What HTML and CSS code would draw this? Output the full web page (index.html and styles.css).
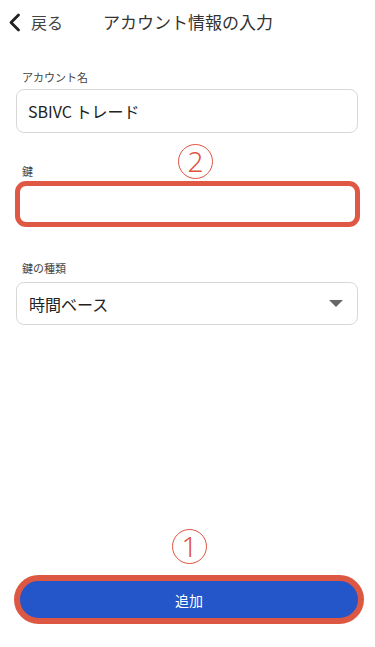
FILE: index.html
```html
<!DOCTYPE html>
<html lang="ja">
<head>
<meta charset="utf-8">
<title>アカウント情報の入力</title>
<link rel="stylesheet" href="styles.css">
</head>
<body>
<div class="screen">
  <header class="header">
    <div class="back">
      <svg class="chev" width="13" height="19" viewBox="0 0 13 19"><path d="M10.5 2 L3 9.5 L10.5 17" fill="none" stroke="#222" stroke-width="2.8" stroke-linecap="round" stroke-linejoin="round"/></svg>
      <span class="back-text">戻る</span>
    </div>
    <h1 class="title">アカウント情報の入力</h1>
  </header>

  <main class="form">
    <div class="field f1">
      <div class="label">アカウント名</div>
      <div class="input">SBIVC トレード</div>
    </div>
    <div class="field f2">
      <span class="mark mark2">2</span>
      <div class="label">鍵</div>
      <div class="input key"></div>
    </div>
    <div class="field f3">
      <div class="label">鍵の種類</div>
      <div class="input select">
        <span>時間ベース</span>
        <span class="arrow"></span>
      </div>
    </div>
  </main>

  <footer class="footer">
    <span class="mark mark1">1</span>
    <button class="add">追加</button>
  </footer>
</div>
</body>
</html>
```

FILE: styles.css
```css
* { box-sizing: border-box; }
html, body { margin: 0; padding: 0; background: #fff; }
body {
  font-family: "Noto Sans CJK JP", "Noto Sans", sans-serif;
  color: #222;
}
.screen {
  width: 375px;
  height: 647px;
  display: flex;
  flex-direction: column;
  position: relative;
}
.header {
  height: 44px;
  display: flex;
  align-items: center;
  padding-left: 8px;
}
.back {
  display: flex;
  align-items: center;
  width: 95px;
}
.chev { display: block; }
.back-text {
  margin-left: 10px;
  font-size: 16px;
  color: #444;
  line-height: 20px;
}
.title {
  margin: 0;
  font-size: 17px;
  font-weight: 400;
  color: #333;
  line-height: 22px;
}
.form {
  padding: 0 17px 0 16px;
  display: flex;
  flex-direction: column;
}
.field { position: relative; }
.label {
  font-size: 11px;
  line-height: 14px;
  color: #444;
  padding-left: 6px;
}
.input {
  height: 44px;
  border: 1px solid #d8d8d8;
  border-radius: 8px;
  display: flex;
  align-items: center;
  padding-left: 11px;
  font-size: 16px;
  color: #222;
}
.f1 { margin-top: 26px; }
.f1 .label { margin-bottom: 5px; }
.f2 { margin-top: 31px; }
.f2 .label { margin-bottom: 3px; }
.input.key {
  height: 46px;
  border: 5px solid #df5844;
  border-radius: 11px;
  margin-left: -1px;
  margin-right: -2px;
}
.f3 { margin-top: 34px; }
.f3 .label { margin-bottom: 7px; }
.input.select {
  height: 43px;
  justify-content: space-between;
  padding-left: 12px;
  padding-right: 14px;
}
.arrow {
  width: 0;
  height: 0;
  border-left: 7px solid transparent;
  border-right: 7px solid transparent;
  border-top: 7px solid #666;
}
.mark {
  position: absolute;
  width: 35px;
  height: 35px;
  border: 1.5px solid #e0533f;
  border-radius: 50%;
  color: #e0533f;
  font-family: "Noto Sans", sans-serif;
  font-weight: 300;
  font-size: 28px;
  line-height: 32px;
  text-align: center;
}
.mark2 { left: 162px; top: -20px; }
.footer {
  margin-top: auto;
  padding: 0 11px 23px 14px;
  position: relative;
}
.mark1 { left: 172px; top: -46px; }
.add {
  display: block;
  width: 100%;
  height: 49px;
  border: 6px solid #dd5843;
  border-radius: 25px;
  background: #2456c9;
  color: #fff;
  font-family: "Noto Sans CJK JP", sans-serif;
  font-size: 14px;
  padding: 0;
}
```
